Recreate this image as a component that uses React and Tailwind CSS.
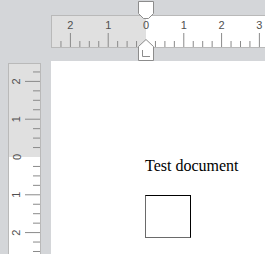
import React from 'react';

const CM = 37.795;
const Q = CM / 4;
const FONT = '"Liberation Sans", Arial, sans-serif';

function HRuler() {
    const ticks = [];
    for (let k = -9; k <= 13; k++) {
        const x = 94 + k * Q;
        if (k % 4 === 0) {
            if (k !== 0) ticks.push(<line key={'t' + k} x1={x} x2={x} y1={17} y2={31} stroke="#8a8a8a" strokeWidth="1" />);
            ticks.push(
                <text key={'l' + k} x={x} y={12.5} textAnchor="middle" fontSize="11" fill="#505050" fontFamily={FONT}>
                    {Math.abs(k / 4)}
                </text>
            );
        } else {
            ticks.push(<line key={'t' + k} x1={x} x2={x} y1={25} y2={31} stroke="#8a8a8a" strokeWidth="1" />);
        }
    }
    return (
        <div className="relative w-[230px] h-[33px] border border-[#b9b9b9] bg-white flex">
            <div className="w-[94px] h-full bg-[#e0e0e0] shrink-0" />
            <svg className="absolute inset-0" width="228" height="31">
                {ticks}
            </svg>
        </div>
    );
}

function VRuler() {
    const ticks = [];
    for (let k = -9; k <= 10; k++) {
        const y = 93 + k * Q;
        if (k % 4 === 0) {
            if (k !== 0) ticks.push(<line key={'t' + k} y1={y} y2={y} x1={16} x2={31} stroke="#8a8a8a" strokeWidth="1" />);
            ticks.push(
                <text key={'l' + k} x={7.5} y={y} textAnchor="middle" dominantBaseline="central" fontSize="11" fill="#505050" fontFamily={FONT} transform={`rotate(-90 7.5 ${y})`}>
                    {Math.abs(k / 4)}
                </text>
            );
        } else {
            ticks.push(<line key={'t' + k} y1={y} y2={y} x1={24} x2={31} stroke="#8a8a8a" strokeWidth="1" />);
        }
    }
    return (
        <div className="relative w-[33px] h-[200px] border border-[#b9b9b9] bg-white flex flex-col">
            <div className="h-[93px] w-full bg-[#e0e0e0] shrink-0" />
            <svg className="absolute inset-0" width="31" height="198">
                {ticks}
            </svg>
        </div>
    );
}

// indent markers sitting over the horizontal ruler
const Markers = () => (
    <svg className="absolute left-0 top-0" width="265" height="62">
        <path d="M138.5 1.5 H153.5 V13.5 L148.5 18.5 H143.5 L138.5 13.5 Z" fill="#ffffff" stroke="#8c8c8c" strokeWidth="1" />
        <path d="M146 39.5 L153.5 46.5 V60.5 H138.5 V46.5 Z" fill="#ffffff" stroke="#8c8c8c" strokeWidth="1" />
        <path d="M142.5 50 V56.5 H150" fill="none" stroke="#8c8c8c" strokeWidth="1" />
    </svg>
);

export default function App() {
    return (
        <div className="relative w-[265px] h-[254px] overflow-hidden bg-[#d4d6d9] flex flex-col">
            <div className="h-[61px] shrink-0 pt-[15px] pl-[51px]">
                <HRuler />
            </div>
            <div className="flex flex-1 min-h-0">
                <div className="ml-[8px] mt-[2px] shrink-0">
                    <VRuler />
                </div>
                <div className="ml-[10px] flex-1 bg-white pl-[94px] pt-[96px]" style={{ fontFamily: '"Liberation Serif", "Times New Roman", serif' }}>
                    <p className="text-[16px] leading-[18px] text-black whitespace-nowrap">Test document</p>
                    <div className="mt-[20px] w-[46px] h-[43px] border border-black border-l-[#6a6a6a] border-b-[#6a6a6a]" />
                </div>
            </div>
            <Markers />
        </div>
    );
}
